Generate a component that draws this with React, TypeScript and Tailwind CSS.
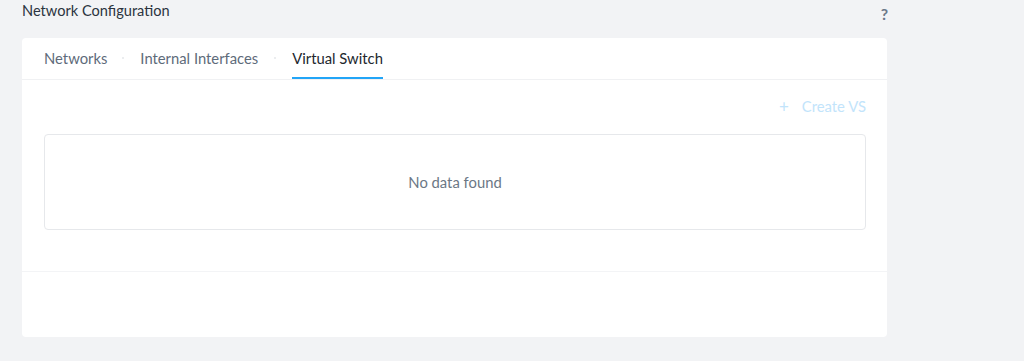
import React from "react";

export default function App() {
  return (
    <div
      className="w-[1024px] h-[361px] bg-[#f2f3f5] overflow-hidden"
      style={{ fontFamily: "Lato, 'Open Sans', sans-serif" }}
    >
      <div className="flex items-start justify-between w-[888px] pl-[22px] h-[38px]">
        <div className="text-[14.6px] leading-[20px] pt-[1px] text-[#2b3440]">Network Configuration</div>
        <div className="text-[16px] leading-[20px] pt-[4px] font-bold text-[#6b7888]">?</div>
      </div>
      <div className="ml-[22px] w-[865px] h-[299px] bg-white rounded-[4px] flex flex-col">
        <div className="h-[42px] border-b border-[#f0f1f3] flex items-end pl-[22px]">
          <div className="flex items-center h-[42px] text-[14.8px] text-[#5e6b7a]">
            <div className="h-full flex items-center">Networks</div>
            <div className="w-[2px] h-[2px] rounded-full bg-[#e5e7ea] ml-[15px] mr-[16px]" />
            <div className="h-full flex items-center">Internal Interfaces</div>
            <div className="w-[2px] h-[2px] rounded-full bg-[#e5e7ea] ml-[16px] mr-[16px]" />
            <div className="h-full flex items-center border-b-2 border-[#22a5f7] text-[#22272e] pt-[2px]">
              Virtual Switch
            </div>
          </div>
        </div>
        <div className="flex justify-end pr-[21px] pt-[16px] h-[54px]">
          <div className="flex items-center gap-[13px] text-[14.8px] leading-[20px] text-[#c2e4fb] h-[20px]">
            <span className="text-[17px] leading-none">+</span>
            <span>Create VS</span>
          </div>
        </div>
        <div className="ml-[22px] mr-[21px] h-[96px] border border-[#e6e8eb] rounded-[4px] flex items-center justify-center text-[14.8px] text-[#6b7785]">
          No data found
        </div>
        <div className="mt-[41px] border-t border-[#f3f4f6]" />
      </div>
    </div>
  );
}
